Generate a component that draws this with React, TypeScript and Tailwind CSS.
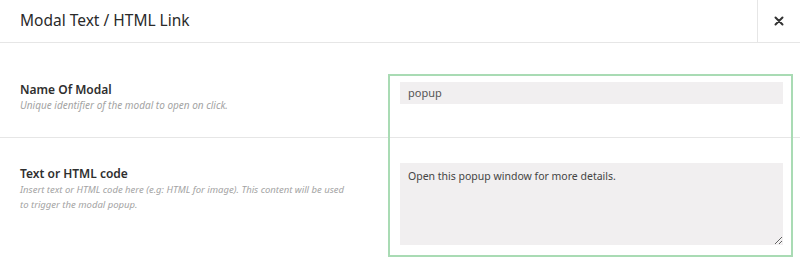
import React from "react";

export default function App() {
  const font = { fontFamily: '"Noto Sans", "Open Sans", sans-serif' };
  return (
    <div className="relative w-[800px] h-[260px] bg-white overflow-hidden text-[#333]" style={font}>
      <div className="flex h-[43px] border-b border-[#e6e6e6]">
        <div className="flex-1 flex items-center pl-5 text-[15.5px] text-[#2a2a2a]">Modal Text / HTML Link</div>
        <div className="w-[43px] border-l border-[#e6e6e6] flex items-center justify-center">
          <svg width="10" height="10" viewBox="0 0 10 10">
            <path d="M1.5 1.5 L8.5 8.5 M8.5 1.5 L1.5 8.5" stroke="#333" strokeWidth="2" strokeLinecap="round" />
          </svg>
        </div>
      </div>
      <div className="flex h-[95px] border-b border-[#e6e6e6]">
        <div className="w-[400px] pl-5 pt-[38px]">
          <div className="text-[12px] font-semibold leading-[17px] text-[#2f2f2f]">Name Of Modal</div>
          <div className="text-[10px] italic leading-[15px] text-[#a3a3a3]">Unique identifier of the modal to open on click.</div>
        </div>
        <div className="w-[383px] pt-[39px]">
          <div className="h-[22px] bg-[#f1eff0] flex items-center pl-2 text-[11px] text-[#555]">popup</div>
        </div>
      </div>
      <div className="flex h-[123px]">
        <div className="w-[400px] pl-5 pt-[27px]">
          <div className="text-[12px] font-semibold leading-[17px] text-[#2f2f2f]">Text or HTML code</div>
          <div className="whitespace-nowrap text-[9.5px] italic leading-[15px] text-[#a3a3a3]">
            Insert text or HTML code here (e.g: HTML for image). This content will be used
            <br />
            to trigger the modal popup.
          </div>
        </div>
        <div className="w-[383px] pt-[25px]">
          <textarea
            readOnly
            defaultValue="Open this popup window for more details."
            className="block w-full h-[82px] bg-[#f1eff0] px-2 py-[5px] text-[10.5px] leading-[16px] text-[#444] outline-none resize-y"
            style={font}
          />
        </div>
      </div>
      <div className="absolute left-[388px] top-[74px] w-[405px] h-[183px] border-2 border-[#a9dbb4] pointer-events-none" />
    </div>
  );
}
